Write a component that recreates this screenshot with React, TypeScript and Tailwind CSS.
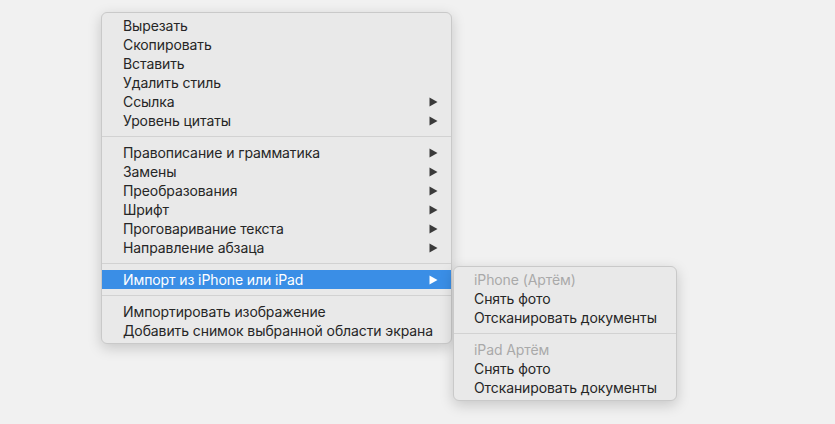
type Row = { label: string; arrow?: boolean };

const groupA: Row[] = [
  { label: 'Вырезать' },
  { label: 'Скопировать' },
  { label: 'Вставить' },
  { label: 'Удалить стиль' },
  { label: 'Ссылка', arrow: true },
  { label: 'Уровень цитаты', arrow: true },
];

const groupB: Row[] = [
  { label: 'Правописание и грамматика', arrow: true },
  { label: 'Замены', arrow: true },
  { label: 'Преобразования', arrow: true },
  { label: 'Шрифт', arrow: true },
  { label: 'Проговаривание текста', arrow: true },
  { label: 'Направление абзаца', arrow: true },
];

const groupC: Row[] = [
  { label: 'Импортировать изображение' },
  { label: 'Добавить снимок выбранной области экрана' },
];

const menuFont = { fontFamily: 'Inter, "Liberation Sans", sans-serif' };

export default function App() {
  return (
    <div
      className="h-[424px] w-[835px] overflow-hidden bg-[#f1f1f1] pl-[101px] pt-[12px]"
      style={menuFont}
    >
      <div className="w-[351px] rounded-[6px] border border-[#c9c9c9] bg-[#e9e9e9] py-[3px] text-[14px] text-[#262626] shadow-[0_4px_14px_rgba(0,0,0,0.18)]">
        {groupA.map((r) => (
          <MenuRow key={r.label} {...r} />
        ))}
        <Separator />
        {groupB.map((r) => (
          <MenuRow key={r.label} {...r} />
        ))}
        <Separator />
        <div className="relative">
          <MenuRow label="Импорт из iPhone или iPad" arrow active />
          <Submenu />
        </div>
        <Separator />
        {groupC.map((r) => (
          <MenuRow key={r.label} {...r} />
        ))}
      </div>
    </div>
  );
}

function MenuRow({ label, arrow, active }: Row & { active?: boolean }) {
  return (
    <div
      className={`flex h-[19px] items-center justify-between pl-[21px] pr-[13px] leading-none ${
        active ? 'bg-[#3a8ee6] text-white' : ''
      }`}
    >
      <span className="tracking-[-0.1px]">{label}</span>
      {arrow && <Triangle color={active ? '#ffffff' : '#3a3a3a'} />}
    </div>
  );
}

function Separator() {
  return (
    <div className="flex h-[13px] items-center">
      <div className="h-px w-full bg-[#d2d2d2]" />
    </div>
  );
}

function Triangle({ color }: { color: string }) {
  return (
    <svg width="9" height="10" viewBox="0 0 9 10" aria-hidden="true">
      <path d="M0.5 0.5 L8.5 5 L0.5 9.5 Z" fill={color} />
    </svg>
  );
}

function Submenu() {
  return (
    <div className="absolute left-[351px] top-[-4px] w-[224px] rounded-[6px] border border-[#c9c9c9] bg-[#e9e9e9] py-[3px] shadow-[0_4px_14px_rgba(0,0,0,0.18)]">
      <SubRow label="iPhone (Артём)" muted />
      <SubRow label="Снять фото" />
      <SubRow label="Отсканировать документы" />
      <Separator />
      <SubRow label="iPad Артём" muted />
      <SubRow label="Снять фото" />
      <SubRow label="Отсканировать документы" />
    </div>
  );
}

function SubRow({ label, muted }: { label: string; muted?: boolean }) {
  return (
    <div
      className={`flex h-[19px] items-center pl-[20px] leading-none tracking-[-0.1px] ${
        muted ? 'text-[#a9a9a9]' : 'text-[#262626]'
      }`}
    >
      {label}
    </div>
  );
}
